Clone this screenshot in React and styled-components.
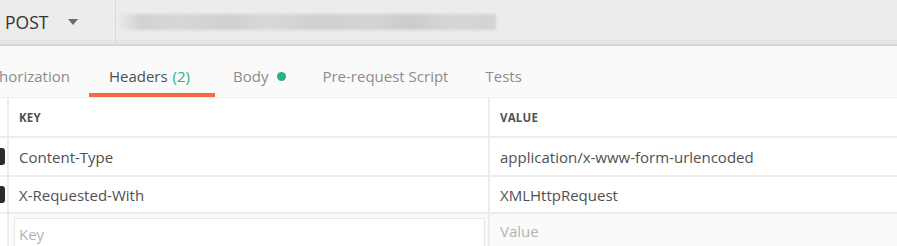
import styled, { createGlobalStyle } from 'styled-components';

const GlobalStyle = createGlobalStyle`
    html, body {
        margin: 0;
        padding: 0;
        background: #ffffff;
        font-family: "Open Sans", "Noto Sans", sans-serif;
    }
    * { box-sizing: border-box; }
`;

const Page = styled.div`
    width: 897px;
    height: 246px;
    overflow: hidden;
    background: #ffffff;
`;

const RequestBar = styled.div`
    display: flex;
    height: 46px;
    background: #ececec;
    border-bottom: 2px solid #d6d6d6;
    box-shadow: inset 0 -4px 0 #e6e6e6;
`;

const MethodSelect = styled.div`
    display: flex;
    align-items: center;
    width: 116px;
    padding: 0 0 0 5px;
    border-right: 1px solid #d9d9d9;
    font-size: 17.5px;
    color: #333333;
`;

const Caret = styled.span`
    margin-left: 20px;
    width: 0;
    height: 0;
    border-left: 5px solid transparent;
    border-right: 5px solid transparent;
    border-top: 6px solid #6b6b6b;
`;

const UrlField = styled.div`
    flex: 1;
    display: flex;
    align-items: center;
    padding: 0 0 0 4px;
`;

const Blurred = styled.div`
    width: 376px;
    height: 16px;
    background: linear-gradient(
        90deg,
        #e6e6e6 0px,
        #dcdcdc 12px,
        #d2d2d2 20px,
        #d6d6d6 60px,
        #d0d0d0 110px,
        #d8d8d8 150px,
        #cfcfcf 200px,
        #d4d4d4 250px,
        #cbcbcb 290px,
        #d6d6d6 330px,
        #d2d2d2 376px
    );
    filter: blur(1.5px);
`;

const TabBar = styled.div`
    display: flex;
    align-items: stretch;
    height: 52px;
    background: #fafafa;
    border-bottom: 1px solid #efefef;
    overflow: hidden;
`;

const Tab = styled.div`
    display: flex;
    align-items: center;
    padding: 13px ${(p) => p.$right ?? 18}px 0 ${(p) => p.$left ?? 18}px;
    margin-left: ${(p) => p.$offset || 0}px;
    font-size: 15px;
    color: ${(p) => (p.$active ? '#505050' : '#8c8c8c')};
    border-bottom: 4px solid ${(p) => (p.$active ? '#f26b3a' : 'transparent')};
    white-space: nowrap;
`;

const Count = styled.span`
    margin-left: 5px;
    color: #26b47f;
`;

const Dot = styled.span`
    width: 9px;
    height: 9px;
    border-radius: 50%;
    background: #26b47f;
    margin-left: 9px;
`;

const Table = styled.div`
    display: grid;
    grid-template-columns: 9px 481px 1fr;
`;

const Cell = styled.div`
    display: flex;
    align-items: center;
    height: ${(p) => p.$h}px;
    padding-left: ${(p) => p.$pl ?? 10}px;
    border-bottom: ${(p) => (p.$last ? 'none' : '2px solid #ececec')};
    border-right: ${(p) => (p.$divider ? '2px solid #ececec' : 'none')};
    background: ${(p) => p.$bg || '#ffffff'};
    font-size: 15px;
    color: #505050;
    white-space: nowrap;
`;

const HeadLabel = styled.span`
    font-size: 11.5px;
    font-weight: 700;
    color: #505050;
    letter-spacing: 0.2px;
`;

const Check = styled.span`
    width: 5px;
    height: 17px;
    background: #2b2b2b;
    border-radius: 0 3px 3px 0;
`;

const InputBox = styled.div`
    display: flex;
    align-items: center;
    align-self: flex-end;
    width: 100%;
    height: 30px;
    margin-right: 3px;
    padding-left: 4px;
    border: 1px solid #e6e6e6;
    border-bottom: none;
    background: #ffffff;
    color: #b3b3b3;
    font-size: 15px;
`;

const Placeholder = styled.span`
    color: #b3b3b3;
`;

const rows = [
    { key: 'Content-Type', value: 'application/x-www-form-urlencoded', h: 39 },
    { key: 'X-Requested-With', value: 'XMLHttpRequest', h: 37 },
];

export default function App() {
    return (
        <Page>
            <GlobalStyle />
            <RequestBar>
                <MethodSelect>
                    POST
                    <Caret />
                </MethodSelect>
                <UrlField>
                    <Blurred />
                </UrlField>
            </RequestBar>
            <TabBar>
                <Tab $left={0} $right={19} $offset={-25}>
                    Authorization
                </Tab>
                <Tab $left={20} $right={25} $active>
                    Headers<Count>(2)</Count>
                </Tab>
                <Tab>
                    Body<Dot />
                </Tab>
                <Tab>Pre-request Script</Tab>
                <Tab $left={19}>Tests</Tab>
            </TabBar>
            <Table>
                <Cell $h={40} $pl={0} $divider />
                <Cell $h={40} $divider>
                    <HeadLabel>KEY</HeadLabel>
                </Cell>
                <Cell $h={40}>
                    <HeadLabel>VALUE</HeadLabel>
                </Cell>
                {rows.map((r) => [
                    <Cell key={r.key + '-c'} $h={r.h} $pl={0} $divider>
                        <Check />
                    </Cell>,
                    <Cell key={r.key + '-k'} $h={r.h} $divider>
                        {r.key}
                    </Cell>,
                    <Cell key={r.key + '-v'} $h={r.h}>
                        {r.value}
                    </Cell>,
                ])}
                <Cell $h={34} $pl={0} $divider $last />
                <Cell $h={34} $pl={5} $divider $last $bg="#fafafa">
                    <InputBox>Key</InputBox>
                </Cell>
                <Cell $h={34} $last $bg="#fafafa">
                    <Placeholder>Value</Placeholder>
                </Cell>
            </Table>
        </Page>
    );
}
